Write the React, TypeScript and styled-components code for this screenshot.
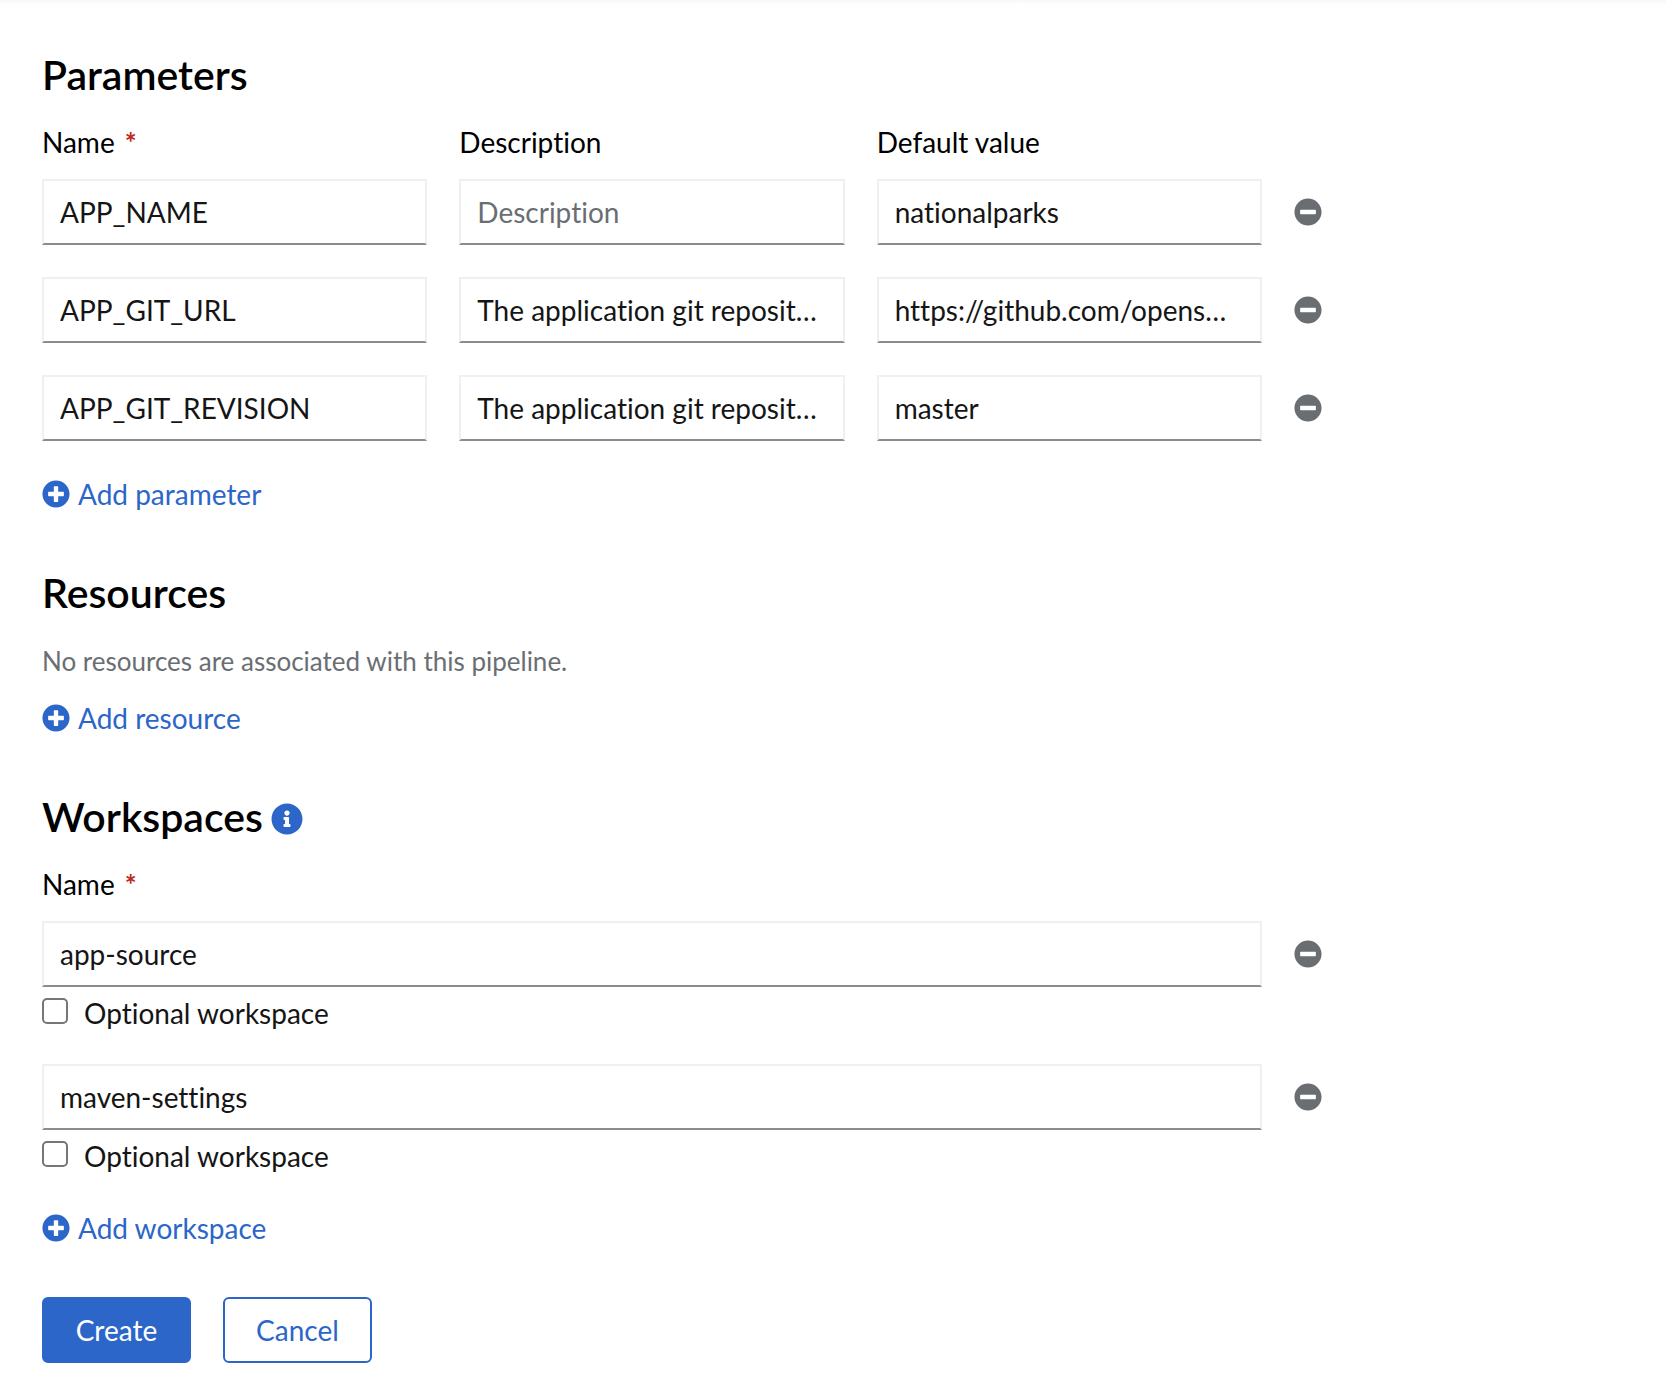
import React, { useState } from 'react';
import styled, { createGlobalStyle } from 'styled-components';
import { FaInfoCircle, FaMinusCircle, FaPlusCircle } from 'react-icons/fa';

const color = {
  text: '#151515',
  heading: '#000000',
  muted: '#6a6e73',
  link: '#2b66c8',
  danger: '#c0281c',
  border: '#f0f0f0',
  borderStrong: '#8a8d90',
};

const GlobalStyle = createGlobalStyle`
  *, *::before, *::after { box-sizing: border-box; }
  body {
    margin: 0;
    background: #fff;
    color: ${color.text};
    font-family: Lato, "Liberation Sans", sans-serif;
    font-size: 28px;
    font-variant-ligatures: none;
    line-height: 42px;
  }
  button, input { font: inherit; font-variant-ligatures: none; }
`;

const Page = styled.main`
  padding: 51px 42px 20px;
  background: linear-gradient(#f7f7f7, #fff 5px);
`;

const Form = styled.form`
  max-width: 1280px;
`;

const Section = styled.section<{ $last?: boolean }>`
  margin-bottom: ${(p) => (p.$last ? 48 : 54)}px;
`;

const Title = styled.h2`
  display: flex;
  align-items: center;
  gap: 8px;
  margin: 0 0 22px;
  color: ${color.heading};
  font-size: 41px;
  font-weight: 600;
  line-height: 48px;
`;

const InfoButton = styled.button`
  display: flex;
  padding: 4px 0 0;
  border: 0;
  background: none;
  color: ${color.link};
  font-size: 32px;
`;

const Row = styled.div`
  display: grid;
  grid-template-columns: minmax(0, 1fr) 28px;
  column-gap: 32px;
  align-items: center;
`;

const Fields = styled.div<{ $columns: number }>`
  display: grid;
  grid-template-columns: repeat(${(p) => p.$columns}, minmax(0, 1fr));
  column-gap: 32px;
`;

const HeaderRow = styled(Row)`
  margin-bottom: 16px;
  color: ${color.heading};
`;

const Required = styled.span`
  margin-left: 10px;
  color: ${color.danger};
  font-weight: 700;
`;

const TextInput = styled.input`
  width: 100%;
  height: 66px;
  padding: 0 20px 0 16px;
  border: 2px solid ${color.border};
  border-bottom-color: ${color.borderStrong};
  border-radius: 0;
  outline: 0;
  background: #fff;
  color: ${color.text};
  text-overflow: ellipsis;

  &::placeholder {
    color: ${color.muted};
    opacity: 1;
  }
`;

const RemoveButton = styled.button`
  display: flex;
  padding: 0;
  border: 0;
  background: none;
  color: ${color.muted};
`;

const ParameterList = styled.div`
  display: grid;
  row-gap: 32px;
  margin-bottom: 32px;
`;

const WorkspaceList = styled.div`
  display: grid;
  row-gap: 30px;
  margin-bottom: 30px;
`;

const CheckLabel = styled.label`
  display: inline-flex;
  align-items: center;
  gap: 16px;
  margin-top: 5px;
`;

const Checkbox = styled.input`
  appearance: none;
  width: 26px;
  height: 26px;
  margin: 0 0 4px;
  border: 2px solid #767676;
  border-radius: 5px;
  background: #fff;

  &:checked {
    border-color: ${color.link};
    background: ${color.link};
  }
`;

const AddButton = styled.button`
  display: flex;
  align-items: center;
  gap: 8px;
  padding: 0;
  border: 0;
  background: none;
  color: ${color.link};
`;

const EmptyText = styled.p`
  margin: 0 0 14px;
  color: ${color.muted};
  font-size: 26px;
  line-height: 44px;
`;

const Actions = styled.div`
  display: flex;
  gap: 32px;
`;

const ActionButton = styled.button<{ $primary?: boolean }>`
  min-width: 149px;
  height: 66px;
  padding: 0 28px;
  border: 2px solid ${color.link};
  border-radius: 6px;
  background: ${(p) => (p.$primary ? color.link : '#fff')};
  color: ${(p) => (p.$primary ? '#fff' : color.link)};
`;

const parameters = [
  { name: 'APP_NAME', description: '', value: 'nationalparks' },
  {
    name: 'APP_GIT_URL',
    description: 'The application git repository url',
    value: 'https://github.com/openshift-roadshow/nationalparks.git',
  },
  {
    name: 'APP_GIT_REVISION',
    description: 'The application git repository revision',
    value: 'master',
  },
];

const workspaces = ['app-source', 'maven-settings'];

function Workspace({ id, name }: { id: string; name: string }) {
  const [optional, setOptional] = useState(false);
  return (
    <div>
      <Row>
        <TextInput id={id} aria-labelledby="workspace-name" defaultValue={name} />
        <RemoveButton type="button" aria-label="Remove">
          <FaMinusCircle />
        </RemoveButton>
      </Row>
      <CheckLabel>
        <Checkbox
          type="checkbox"
          checked={optional}
          onChange={(e) => setOptional(e.target.checked)}
        />
        Optional workspace
      </CheckLabel>
    </div>
  );
}

export default function App() {
  return (
    <Page>
      <GlobalStyle />
      <Form onSubmit={(e) => e.preventDefault()}>
        <Section>
          <Title>Parameters</Title>
          <HeaderRow>
            <Fields $columns={3}>
              <label id="param-name" htmlFor="param-name-0">
                Name<Required>*</Required>
              </label>
              <label id="param-description" htmlFor="param-description-0">Description</label>
              <label id="param-value" htmlFor="param-value-0">Default value</label>
            </Fields>
          </HeaderRow>
          <ParameterList>
            {parameters.map((p, i) => (
              <Row key={p.name}>
                <Fields $columns={3}>
                  <TextInput
                    id={`param-name-${i}`}
                    aria-labelledby="param-name"
                    defaultValue={p.name}
                  />
                  <TextInput
                    id={`param-description-${i}`}
                    aria-labelledby="param-description"
                    placeholder="Description"
                    defaultValue={p.description}
                  />
                  <TextInput
                    id={`param-value-${i}`}
                    aria-labelledby="param-value"
                    defaultValue={p.value}
                  />
                </Fields>
                <RemoveButton type="button" aria-label="Remove">
                  <FaMinusCircle />
                </RemoveButton>
              </Row>
            ))}
          </ParameterList>
          <AddButton type="button">
            <FaPlusCircle />
            Add parameter
          </AddButton>
        </Section>

        <Section>
          <Title>Resources</Title>
          <EmptyText>No resources are associated with this pipeline.</EmptyText>
          <AddButton type="button">
            <FaPlusCircle />
            Add resource
          </AddButton>
        </Section>

        <Section $last>
          <Title>
            Workspaces
            <InfoButton type="button" aria-label="More information">
              <FaInfoCircle />
            </InfoButton>
          </Title>
          <HeaderRow>
            <label id="workspace-name" htmlFor="workspace-0">
              Name<Required>*</Required>
            </label>
          </HeaderRow>
          <WorkspaceList>
            {workspaces.map((name, i) => (
              <Workspace key={name} id={`workspace-${i}`} name={name} />
            ))}
          </WorkspaceList>
          <AddButton type="button">
            <FaPlusCircle />
            Add workspace
          </AddButton>
        </Section>

        <Actions>
          <ActionButton type="submit" $primary>Create</ActionButton>
          <ActionButton type="button">Cancel</ActionButton>
        </Actions>
      </Form>
    </Page>
  );
}
